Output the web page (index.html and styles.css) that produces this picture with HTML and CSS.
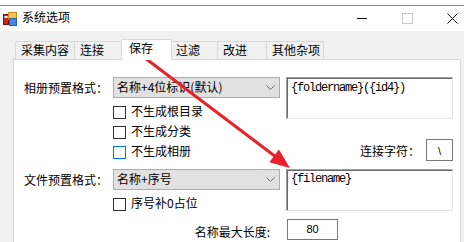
FILE: index.html
```html
<!DOCTYPE html>
<html>
<head>
<meta charset="utf-8">
<link rel="stylesheet" href="styles.css">
</head>
<body>
<div class="screen">
  <div class="topgap"></div>
  <div class="window">
    <div class="titlebar">
      <svg class="appicon" width="14" height="14" viewBox="0 0 14 14">
        <rect x="0.5" y="2.5" width="5" height="10" fill="#c62828" stroke="#7a1010"/>
        <rect x="1.5" y="4" width="3" height="2" fill="#fff"/>
        <rect x="5.5" y="0.5" width="8" height="7" fill="#f9c74f" stroke="#d08a1a"/>
        <rect x="6.5" y="6.5" width="7" height="7" fill="#4a86e8" stroke="#2a5db0"/>
      </svg>
      <span class="title">系统选项</span>
      <div class="controls">
        <svg class="ctl-min" width="10" height="11" viewBox="0 0 10 11"><line x1="0" y1="5.5" x2="10" y2="5.5" stroke="#111" stroke-width="1"/></svg>
        <svg class="ctl-max" width="11" height="11" viewBox="0 0 11 11"><rect x="0.5" y="0.5" width="10" height="10" fill="none" stroke="#c8c8c8"/></svg>
        <svg class="ctl-close" width="11" height="11" viewBox="0 0 11 11"><path d="M0.5 0.5 L10.5 10.5 M10.5 0.5 L0.5 10.5" stroke="#111" stroke-width="1"/></svg>
      </div>
    </div>
    <div class="client">
      <div class="tabs">
        <div class="tab w59">采集内容</div>
        <div class="tab w49">连接</div>
        <div class="tab sel">保存</div>
        <div class="tab w47">过滤</div>
        <div class="tab w49">改进</div>
        <div class="tab w58 last">其他杂项</div>
      </div>
      <div class="panel">
        <div class="group">
          <div class="label">相册预置格式：</div>
          <div class="mid">
            <div class="combo"><span class="combo-text">名称+4位标识(默认)</span><svg class="chev" width="9" height="5" viewBox="0 0 9 5"><polyline points="0.5,0.5 4.5,4.5 8.5,0.5" fill="none" stroke="#707070"/></svg></div>
            <div class="checks">
              <div class="check"><span class="box"></span><span class="txt">不生成根目录</span></div>
              <div class="check"><span class="box"></span><span class="txt">不生成分类</span></div>
              <div class="check"><span class="box focus"></span><span class="txt">不生成相册</span></div>
            </div>
          </div>
          <div class="right">
            <div class="textbox">{foldername}({id4})</div>
            <div class="joinrow"><span class="joinlabel">连接字符：</span><div class="smallbox">\</div></div>
          </div>
        </div>
        <div class="group g2">
          <div class="label">文件预置格式：</div>
          <div class="mid">
            <div class="combo"><span class="combo-text">名称+序号</span><svg class="chev" width="9" height="5" viewBox="0 0 9 5"><polyline points="0.5,0.5 4.5,4.5 8.5,0.5" fill="none" stroke="#707070"/></svg></div>
            <div class="checks">
              <div class="check"><span class="box"></span><span class="txt">序号补0占位</span></div>
            </div>
          </div>
          <div class="right">
            <div class="textbox tb2">{filename}</div>
          </div>
        </div>
        <div class="lenrow">
          <span class="lenlabel">名称最大长度:</span>
          <div class="lenbox">80</div>
        </div>
      </div>
    </div>
  </div>
  <svg class="arrow" width="464" height="242" viewBox="0 0 464 242">
    <line x1="145" y1="58" x2="276" y2="157" stroke="#e8222a" stroke-width="3"/>
    <polygon points="290,168 269.3,162.3 278.9,149.5" fill="#e8222a"/>
  </svg>
</div>
</body>
</html>
```
FILE: styles.css
```css
* { box-sizing: border-box; margin: 0; padding: 0; }
body {
  margin: 0;
  width: 464px;
  height: 242px;
  overflow: hidden;
  background: #fff;
  font-family: "Noto Sans CJK SC", "Microsoft YaHei", sans-serif;
  font-size: 12px;
  color: #000;
}
.screen { position: relative; width: 464px; height: 242px; overflow: hidden; }
.topgap { height: 5px; background: #fff; }
.window { border-top: 1px solid #8a8a8a; }
.titlebar { height: 25px; display: flex; align-items: center; background: #fff; }
.appicon { margin-left: 3px; flex: none; }
.title { margin-left: 5px; line-height: 20px; margin-bottom: 3px; }
.controls { margin-left: auto; display: flex; align-items: center; padding-right: 6px; }
.ctl-max { margin-left: 35px; }
.ctl-close { margin-left: 34px; }

.client { background: #f0f0f0; height: 211px; padding-top: 8px; overflow: hidden; }
.tabs { display: flex; align-items: flex-end; height: 20px; margin-left: 15px; }
.tab {
  height: 18px;
  border: 1px solid #d9d9d9;
  border-bottom: none;
  border-right: none;
  background: #f0f0f0;
  padding-left: 5px;
  line-height: 16px;
  white-space: nowrap;
  flex: none;
}
.w59 { width: 59px; }
.w49 { width: 49px; }
.w47 { width: 47px; }
.w58 { width: 58px; }
.tab.last { border-right: 1px solid #d9d9d9; }
.tab.sel {
  width: 51px;
  height: 21px;
  background: #fff;
  margin: 0 -2px -1px;
  border-right: 1px solid #d9d9d9;
  position: relative;
  z-index: 1;
  padding-left: 7px;
}
.panel {
  margin-left: 13px;
  width: 448px;
  height: 200px;
  background: #fff;
  border: 1px solid #d9d9d9;
  padding: 17px 0 0 10px;
}
.group { display: flex; align-items: flex-start; }
.g2 { margin-top: 7px; }
.label { width: 89px; line-height: 21px; white-space: nowrap; }
.mid { width: 167px; margin-right: 6px; }
.right { width: 167px; }
.combo {
  height: 21px;
  border: 1px solid #adadad;
  background: #e1e1e1;
  display: flex;
  align-items: center;
  justify-content: space-between;
  padding: 0 4px 0 3px;
}
.combo-text { line-height: 17px; align-self: flex-start; white-space: nowrap; }
.chev { flex: none; }
.checks { margin-top: 4px; }
.check { display: flex; align-items: flex-start; height: 20px; }
.box {
  width: 13px;
  height: 13px;
  border: 1px solid #333;
  background: #fff;
  margin-top: 4px;
  margin-right: 5px;
  flex: none;
}
.box.focus { border-color: #0078d7; }
.txt { line-height: 18px; white-space: nowrap; }
.textbox {
  height: 42px;
  border-top: 1px solid #a0a0a0;
  border-left: 1px solid #a0a0a0;
  border-right: 1px solid #e3e3e3;
  border-bottom: 1px solid #e3e3e3;
  box-shadow: inset 1px 1px 0 #696969;
  background: #fff;
  font-family: "Liberation Mono", monospace;
  font-size: 12px;
  letter-spacing: -1.2px;
  line-height: 14px;
  padding: 3px 0 0 4px;
  white-space: nowrap;
}
.tb2 { padding-top: 2px; }
.joinrow { display: flex; justify-content: flex-end; align-items: center; margin-top: 20px; }
.joinlabel { margin-right: 6px; white-space: nowrap; }
.smallbox {
  width: 27px;
  height: 22px;
  border: 1px solid #7a7a7a;
  text-align: center;
  font-family: "Liberation Sans", sans-serif;
  font-size: 11px;
  line-height: 22px;
}
.lenrow { display: flex; align-items: flex-start; justify-content: flex-end; width: 314px; margin-top: 5px; }
.lenlabel { line-height: 20px; margin-top: 3px; margin-right: 17px; white-space: nowrap; }
.lenbox {
  width: 51px;
  height: 21px;
  border: 1px solid #7a7a7a;
  text-align: center;
  font-family: "Liberation Sans", sans-serif;
  font-size: 11px;
  line-height: 19px;
}
.arrow { position: absolute; left: 0; top: 0; pointer-events: none; }
```
